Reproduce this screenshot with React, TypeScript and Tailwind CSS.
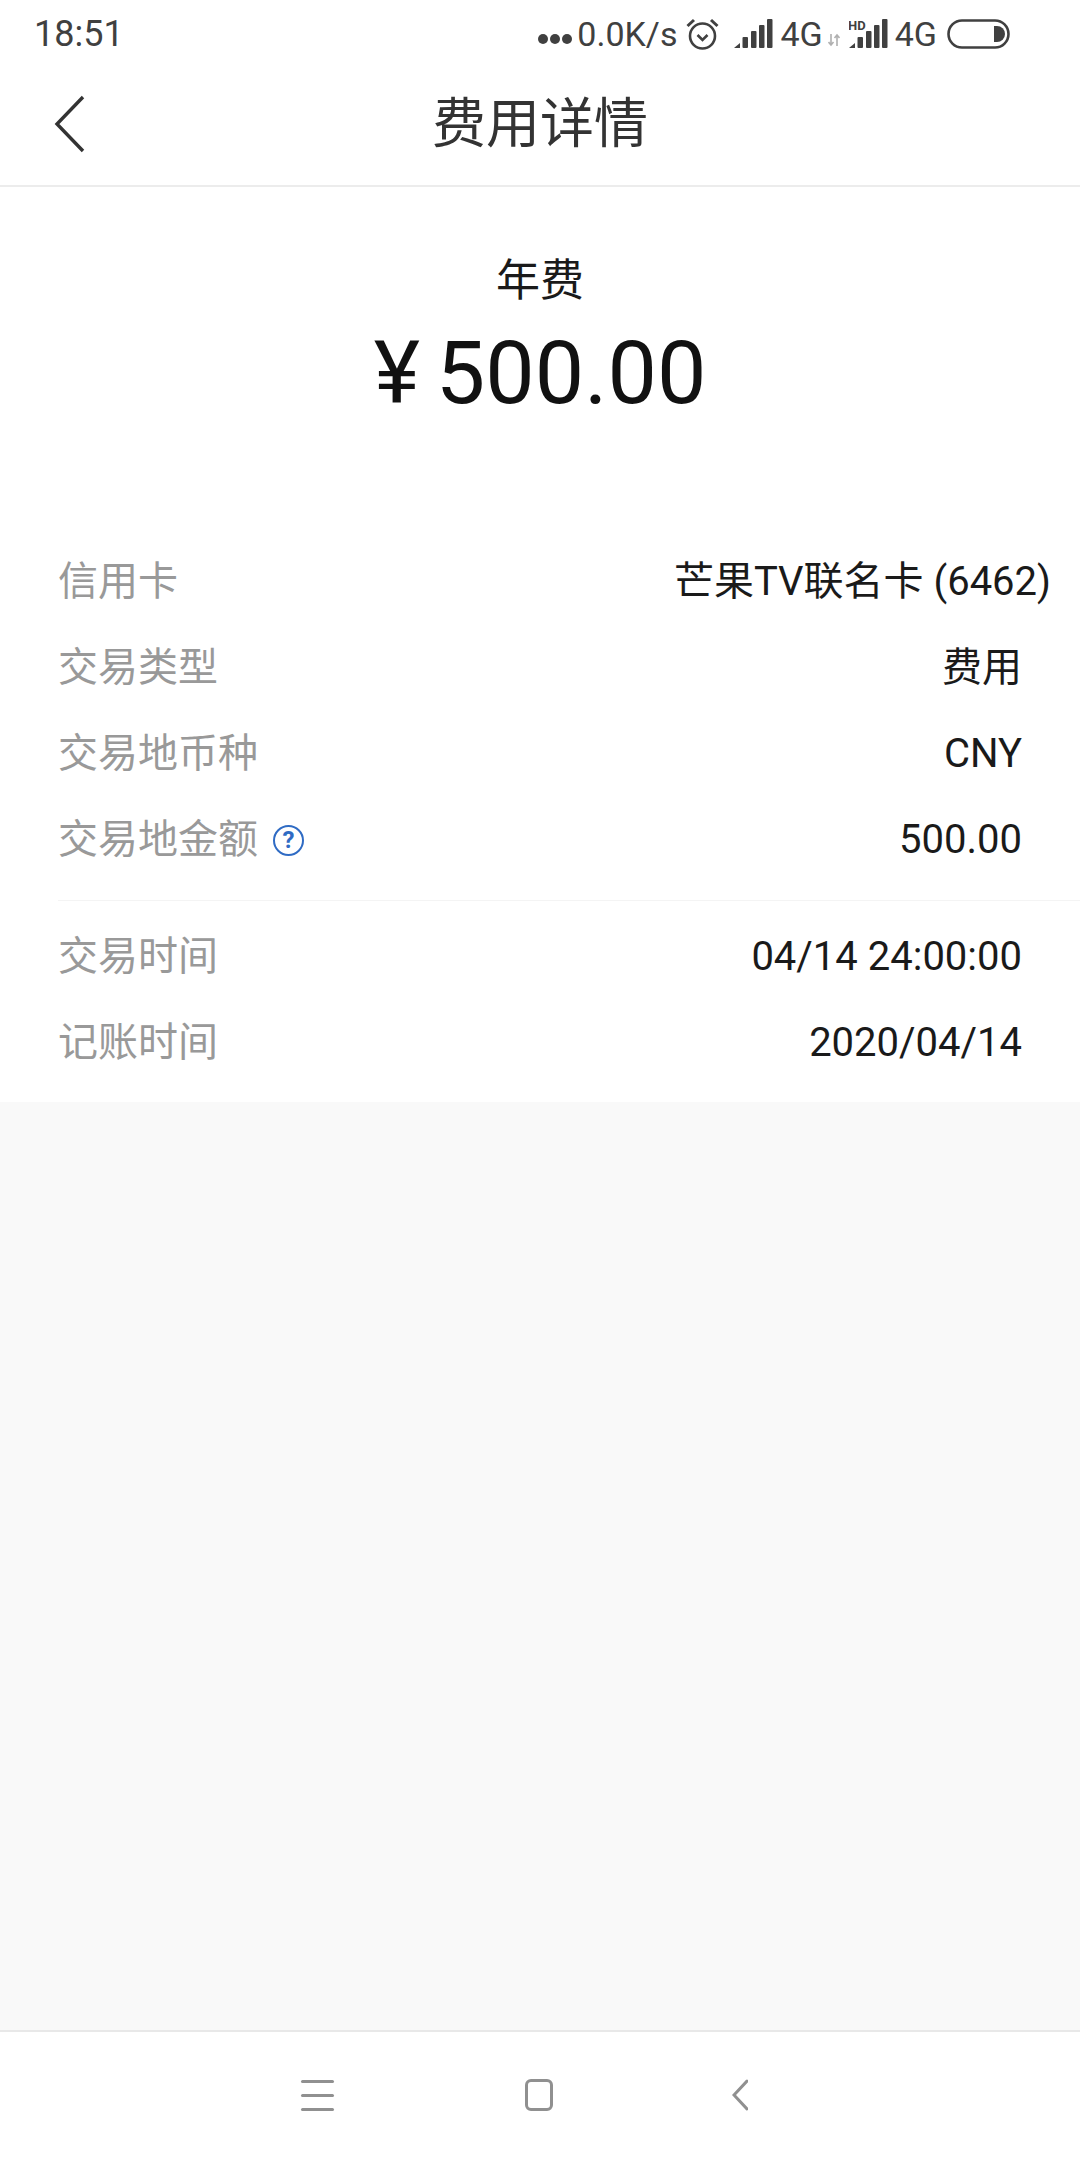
const CJK = "font-['Roboto','Noto_Sans_CJK_SC',sans-serif]";

function Signal({ hd }: { hd?: boolean }) {
  return (
    <svg width="39" height="30" viewBox="0 0 39 30" className="text-[#404040]">
      <path d="M0 29 L6 24 V29 Z" fill="currentColor" />
      <rect x="8.5" y="18" width="5.5" height="11" rx="1" fill="currentColor" />
      <rect x="17" y="12" width="5.5" height="17" rx="1" fill="currentColor" />
      <rect x="25" y={hd ? 6 : 6} width="5.5" height="23" rx="1" fill="currentColor" />
      <rect x="33" y="0" width="5.5" height="29" rx="1" fill="currentColor" />
      {hd && (
        <text x="-1" y="11" fontSize="13" fontWeight="700" fontFamily="Roboto" fill="currentColor">
          HD
        </text>
      )}
    </svg>
  );
}

function StatusBar() {
  return (
    <div className="flex h-[68px] items-center justify-between pl-[34px] pr-[70px] text-[#404040]">
      <span className="text-[36px] leading-none">18:51</span>
      <div className="flex items-center">
        <div className="mt-[10px] mr-[5px] flex gap-[2px]">
          <span className="h-[10px] w-[10px] rounded-full bg-[#404040]" />
          <span className="h-[10px] w-[10px] rounded-full bg-[#404040]" />
          <span className="h-[10px] w-[10px] rounded-full bg-[#404040]" />
        </div>
        <span className="text-[34px] leading-none">0.0K/s</span>
        <svg width="33" height="34" viewBox="0 0 33 34" fill="none" stroke="#404040" className="ml-[9px]">
          <circle cx="16.5" cy="19" r="12.5" strokeWidth="2.6" />
          <path d="M11.5 18 L16.5 23 L21.5 18" strokeWidth="2.6" />
          <path d="M1.5 9 L8 3 M31.5 9 L25 3" strokeWidth="3" />
        </svg>
        <div className="ml-[15px] flex items-center">
          <Signal />
        </div>
        <span className="ml-[7px] text-[34px] leading-none">4G</span>
        <svg width="12" height="14" viewBox="0 0 12 14" stroke="#b0b0b0" strokeWidth="1.6" fill="none" className="mt-[12px] ml-[5px]">
          <path d="M3 1 V12 M0.5 9 L3 12 L5.5 9" />
          <path d="M9 13 V2 M6.5 5 L9 2 L11.5 5" />
        </svg>
        <div className="ml-[9px] flex items-center">
          <Signal hd />
        </div>
        <span className="ml-[7px] text-[34px] leading-none">4G</span>
        <svg width="63" height="30" viewBox="0 0 63 30" fill="none" className="ml-[10px]">
          <rect x="1.5" y="1.5" width="60" height="27" rx="13.5" stroke="#404040" strokeWidth="2.6" />
          <path d="M47 7 H50 A8 8 0 0 1 50 23 H47 Z" fill="#404040" />
        </svg>
      </div>
    </div>
  );
}

function Row({ label, value, help, wide }: { label: string; value: string; help?: boolean; wide?: boolean }) {
  return (
    <div className="flex h-[86px] items-center justify-between">
      <div className="flex items-center text-[40px] leading-none text-[#999999]">
        {label}
        {help && (
          <span className="ml-[15px] flex h-[31px] w-[31px] items-center justify-center rounded-full border-2 border-[#2f6bc4] text-[24px] font-bold text-[#2f6bc4]">
            ?
          </span>
        )}
      </div>
      <div className={`text-[40px] leading-none text-[#1a1a1a] ${wide ? "-mr-[29px]" : ""}`}>{value}</div>
    </div>
  );
}

function NavBar() {
  return (
    <div className="flex h-[130px] items-center border-t-2 border-[#e8e8e8] bg-white pb-[2px]">
      <div className="ml-[301px] flex h-[31px] w-[33px] flex-col justify-between">
        <span className="h-[3px] rounded-full bg-[#909090]" />
        <span className="h-[3px] rounded-full bg-[#909090]" />
        <span className="h-[3px] rounded-full bg-[#909090]" />
      </div>
      <span className="ml-[191px] h-[32px] w-[28px] rounded-[6px] border-[3px] border-[#909090]" />
      <svg width="16" height="32" viewBox="0 0 16 32" fill="none" stroke="#909090" strokeWidth="3" strokeLinecap="round" className="ml-[179px]">
        <path d="M15 2 L2 16 L15 30" />
      </svg>
    </div>
  );
}

export default function App() {
  return (
    <div className={`flex h-[2160px] w-[1080px] flex-col bg-white ${CJK}`}>
      <StatusBar />
      <header className="relative flex h-[119px] items-center justify-center border-b-2 border-[#ececec] pb-[4px]">
        <svg width="32" height="60" viewBox="0 0 32 60" fill="none" stroke="#333333" strokeWidth="3.4" className="absolute top-[27px] left-[54px]">
          <path d="M29 2 L3 29 L29 56" />
        </svg>
        <h1 className="text-[54px] leading-none text-[#333333]">费用详情</h1>
      </header>
      <section className="flex flex-col items-center pt-[72px]">
        <div className="text-[44px] leading-none text-[#1a1a1a]">年费</div>
        <div className="mt-[26px] flex items-center text-[88px] leading-none text-[#111111]">
          <span className="mr-[16px]">¥</span>
          <span>500.00</span>
        </div>
      </section>
      <section className="mt-[122px] pl-[58px]">
        <div className="pr-[58px]">
          <Row label="信用卡" value="芒果TV联名卡 (6462)" wide />
          <Row label="交易类型" value="费用" />
          <Row label="交易地币种" value="CNY" />
          <Row label="交易地金额" value="500.00" help />
        </div>
        <div className="mt-[17px] mb-[13px] h-px bg-[#f4f4f4]" />
        <div className="pr-[58px]">
          <Row label="交易时间" value="04/14 24:00:00" />
          <Row label="记账时间" value="2020/04/14" />
        </div>
      </section>
      <div className="mt-[16px] flex-1 bg-[#f9f9f9]" />
      <NavBar />
    </div>
  );
}
